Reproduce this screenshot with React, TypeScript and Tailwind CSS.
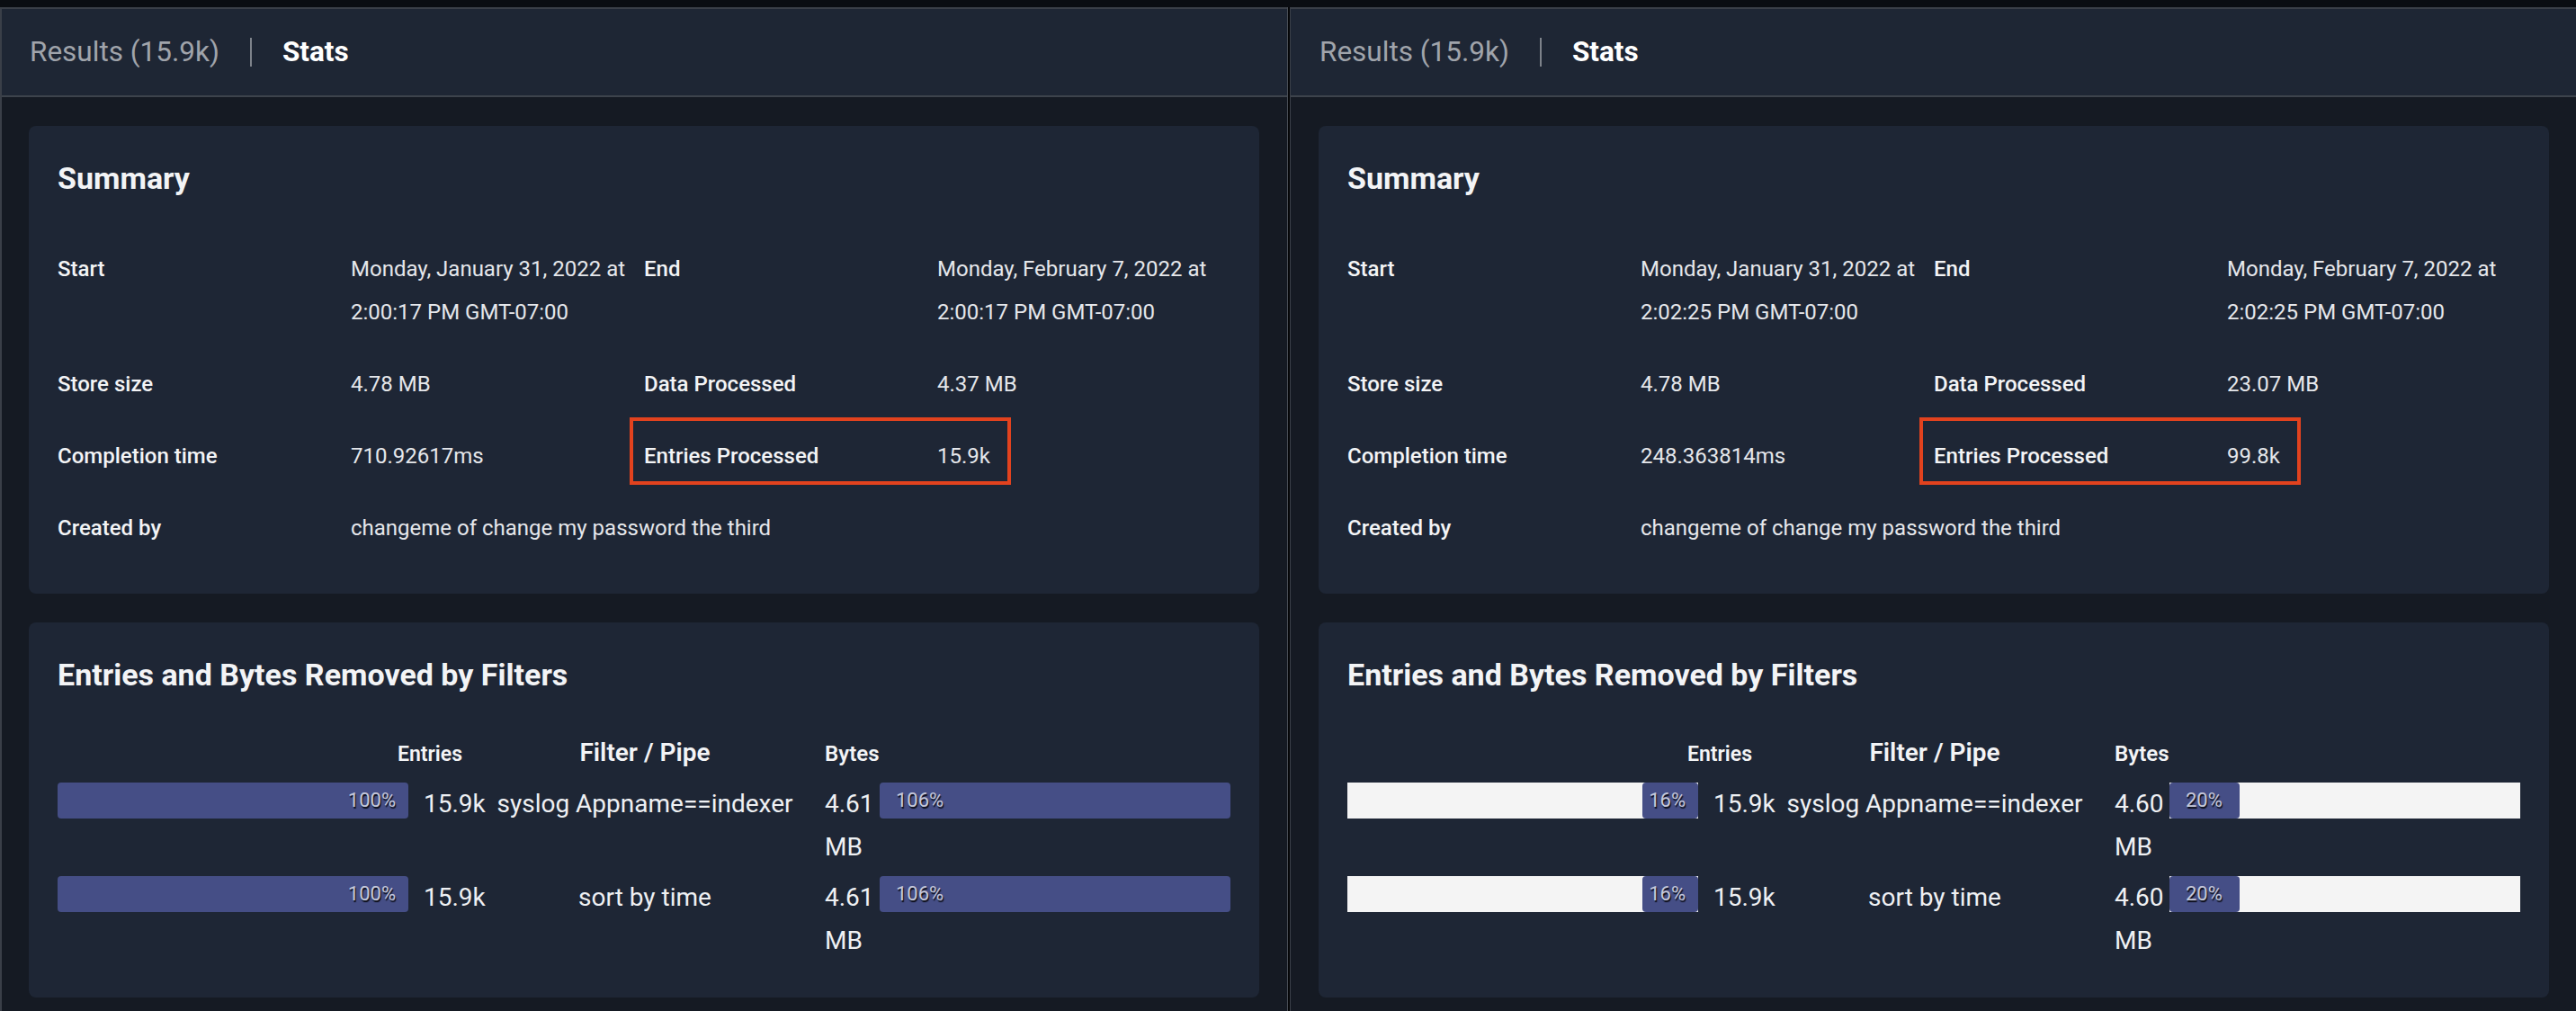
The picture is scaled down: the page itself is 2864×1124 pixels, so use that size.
import React from "react";

type Stat = {
  results: string;
  start: string[];
  end: string[];
  storeSize: string;
  dataProcessed: string;
  completion: string;
  entries: string;
  createdBy: string;
  rows: { filter: string; entries: string; entriesPct: number; bytes: string; bytesPct: number }[];
};

const panels: Stat[] = [
  {
    results: "Results (15.9k)",
    start: ["Monday, January 31, 2022 at", "2:00:17 PM GMT-07:00"],
    end: ["Monday, February 7, 2022 at", "2:00:17 PM GMT-07:00"],
    storeSize: "4.78 MB",
    dataProcessed: "4.37 MB",
    completion: "710.92617ms",
    entries: "15.9k",
    createdBy: "changeme of change my password the third",
    rows: [
      { filter: "syslog Appname==indexer", entries: "15.9k", entriesPct: 100, bytes: "4.61 MB", bytesPct: 106 },
      { filter: "sort by time", entries: "15.9k", entriesPct: 100, bytes: "4.61 MB", bytesPct: 106 },
    ],
  },
  {
    results: "Results (15.9k)",
    start: ["Monday, January 31, 2022 at", "2:02:25 PM GMT-07:00"],
    end: ["Monday, February 7, 2022 at", "2:02:25 PM GMT-07:00"],
    storeSize: "4.78 MB",
    dataProcessed: "23.07 MB",
    completion: "248.363814ms",
    entries: "99.8k",
    createdBy: "changeme of change my password the third",
    rows: [
      { filter: "syslog Appname==indexer", entries: "15.9k", entriesPct: 16, bytes: "4.60 MB", bytesPct: 20 },
      { filter: "sort by time", entries: "15.9k", entriesPct: 16, bytes: "4.60 MB", bytesPct: 20 },
    ],
  },
];

function Bar({ pct, side }: { pct: number; side: "left" | "right" }) {
  const full = pct >= 100;
  return (
    <div
      className={`flex h-[40px] w-full ${side === "right" ? "justify-end" : "justify-start"} ${
        full ? "bg-transparent" : "bg-[#f4f4f4]"
      }`}
    >
      <div
        className={`flex h-full items-center rounded-[4px] bg-[#454e86] ${
          side === "right" ? "justify-end pr-[14px]" : "justify-start pl-[18px]"
        }`}
        style={{ width: `${Math.min(pct, 100)}%` }}
      >
        <span className="whitespace-nowrap text-[22px] leading-none text-[#c6c9da] [text-shadow:1px_2px_1px_rgba(0,0,0,0.85)]">
          {pct}%
        </span>
      </div>
    </div>
  );
}

function Panel({ s, first }: { s: Stat; first?: boolean }) {
  return (
    <div
      className={`flex flex-col ${
        first ? "w-[1431px] border-l-2 border-[#3a3f48]" : "flex-1 shadow-[inset_18px_0_14px_-10px_rgba(0,0,0,0.55)]"
      }`}
    >
      <div className="h-[2px] bg-[#3a3f48]" />
      <div className={`flex h-[96px] items-center bg-[#1e2634] ${first ? "pl-[31px]" : "pl-[32px]"}`}>
        <span className="text-[31.5px] text-[#a0a4ab]">{s.results}</span>
        <span className="mx-[34px] h-[32px] w-[2px] bg-[#7d828a]" />
        <span className="text-[31.5px] font-bold text-white">Stats</span>
      </div>
      <div className="h-[2px] bg-[#3d434c]" />
      <div className={`flex flex-1 flex-col gap-8 bg-[#151a23] pt-8 ${first ? "pl-[30px] pr-[31px]" : "pl-[31px] pr-[30px]"}`}>
        <section className="rounded-[8px] bg-[#1e2635] px-8 pb-[49px] pt-[34px]">
          <h2 className="text-[34px] font-bold leading-[48px] text-[#f3f4f6]">Summary</h2>
          <div className="mt-[53px] grid grid-cols-4 gap-y-8 text-[24px] leading-[48px]">
            <div className="font-medium text-[#f3f4f6]">Start</div>
            <div className="text-[#e5e7eb]">
              {s.start.map((l) => (
                <div key={l}>{l}</div>
              ))}
            </div>
            <div className="font-medium text-[#f3f4f6]">End</div>
            <div className="text-[#e5e7eb]">
              {s.end.map((l) => (
                <div key={l}>{l}</div>
              ))}
            </div>

            <div className="font-medium text-[#f3f4f6]">Store size</div>
            <div className="text-[#e5e7eb]">{s.storeSize}</div>
            <div className="font-medium text-[#f3f4f6]">Data Processed</div>
            <div className="text-[#e5e7eb]">{s.dataProcessed}</div>

            <div className="font-medium text-[#f3f4f6]">Completion time</div>
            <div className="text-[#e5e7eb]">{s.completion}</div>
            <div className="relative font-medium text-[#f3f4f6]">
              Entries Processed
              <div className="pointer-events-none absolute left-[-16px] top-[-19px] h-[75px] w-[424px] border-4 border-[#e2421e]" />
            </div>
            <div className="text-[#e5e7eb]">{s.entries}</div>

            <div className="font-medium text-[#f3f4f6]">Created by</div>
            <div className="col-span-3 text-[#e5e7eb]">{s.createdBy}</div>
          </div>
        </section>

        <section className="rounded-[8px] bg-[#1e2635] px-8 pb-[39px] pt-[34px]">
          <h2 className="text-[34px] font-bold leading-[48px] text-[#f3f4f6]">
            Entries and Bytes Removed by Filters
          </h2>
          <div className="mt-[47px] grid grid-cols-[390px_90px_346px_88px_390px] items-baseline leading-[32px] text-[#f3f4f6]">
            <div className="col-span-2 pr-[30px] text-right text-[23px] font-semibold">Entries</div>
            <div className="text-center text-[28px] font-semibold">Filter / Pipe</div>
            <div className="pl-[27px] text-[24px] font-semibold">Bytes</div>
            <div />
          </div>
          <div className="mt-[15px] flex flex-col gap-2">
            {s.rows.map((r) => (
              <div
                key={r.filter}
                className="grid grid-cols-[390px_90px_346px_88px_390px] items-start text-[28px] leading-[48px] text-[#eef0f3]"
              >
                <Bar pct={r.entriesPct} side="right" />
                <div className="pl-[17px]">{r.entries}</div>
                <div className="whitespace-nowrap text-center">{r.filter}</div>
                <div className="pl-[27px]">{r.bytes}</div>
                <Bar pct={r.bytesPct} side="left" />
              </div>
            ))}
          </div>
        </section>
      </div>
    </div>
  );
}

export default function App() {
  return (
    <div className="flex h-[1124px] w-[2864px] flex-col overflow-hidden bg-[#151a23] font-[Roboto,'Liberation_Sans',sans-serif]">
      <div className="h-[8px] bg-[#0a0d12]" />
      <div className="flex flex-1">
        <Panel s={panels[0]} first />
        <div className="flex w-[4px]">
          <div className="w-[1px] bg-[#4a4f57]" />
          <div className="w-[2px] bg-[#050608]" />
          <div className="w-[1px] bg-[#3a3f48]" />
        </div>
        <Panel s={panels[1]} />
      </div>
    </div>
  );
}
